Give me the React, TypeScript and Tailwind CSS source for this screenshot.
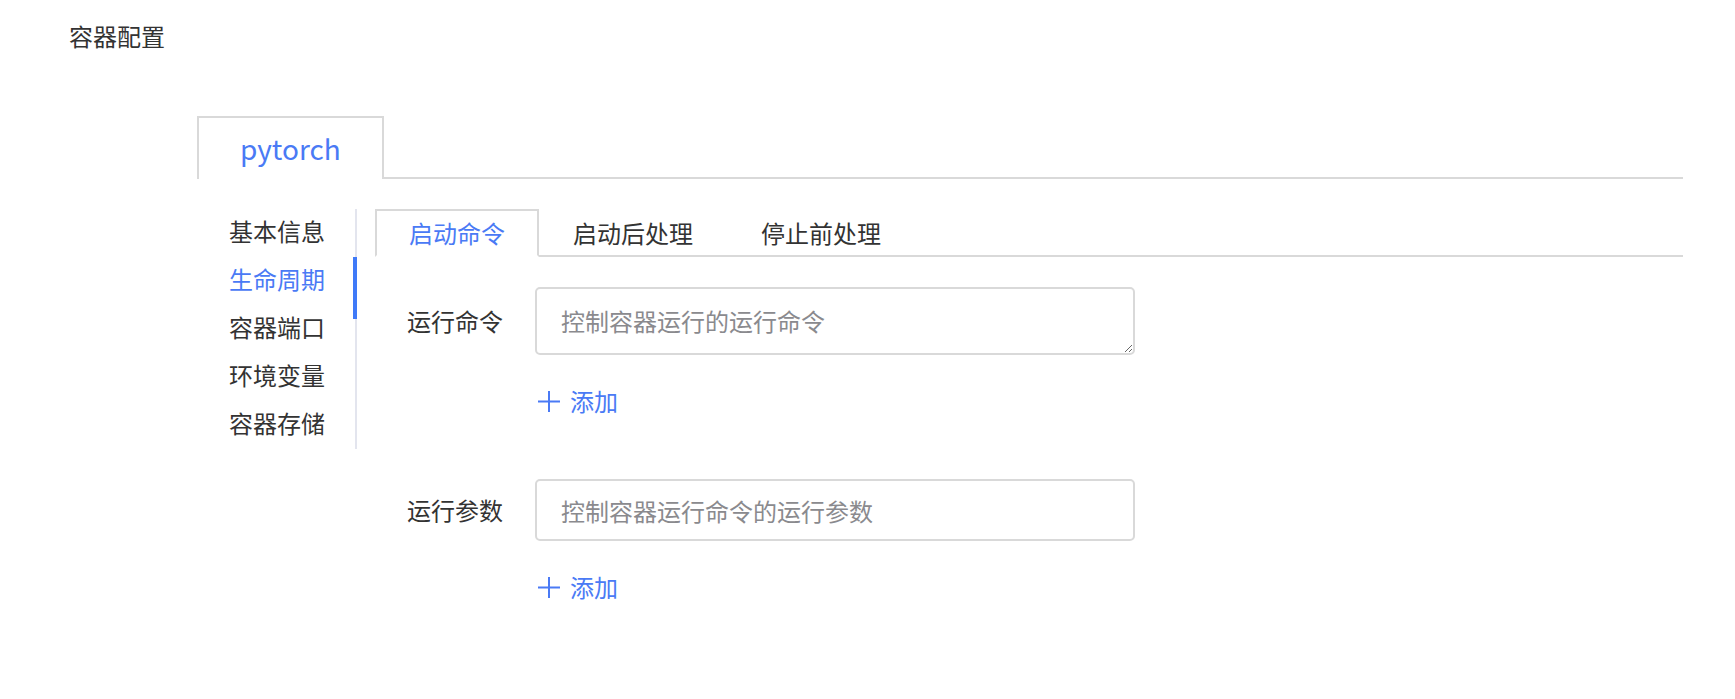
import { useState } from "react";

const navItems = ["基本信息", "生命周期", "容器端口", "环境变量", "容器存储"];
const lifeTabs = ["启动命令", "启动后处理", "停止前处理"];

function PlusIcon() {
  return (
    <svg width="24" height="24" viewBox="0 0 24 24" className="ml-[1px] shrink-0">
      <path d="M2 12.5H24M13 2V23" stroke="#4a7af5" strokeWidth="2" fill="none" />
    </svg>
  );
}

function AddButton() {
  return (
    <div className="flex items-center gap-[10px] mt-[28px] ml-[128px] text-[#4a7af5] leading-[36px] cursor-pointer">
      <PlusIcon />
      <span>添加</span>
    </div>
  );
}

export default function App() {
  const [activeNav] = useState(1);
  const [activeTab, setActiveTab] = useState(0);

  return (
    <div className="min-h-screen bg-white text-[24px] text-[#333] font-['Noto_Sans_CJK_SC','Noto_Sans',sans-serif]">
      <div className="pl-[69px] pt-[18px] leading-[36px]">容器配置</div>

      <div className="ml-[197px] w-[1486px] mt-[62px]">
        {/* container tabs */}
        <div className="flex">
          <div className="h-[63px] flex items-center px-[41px] border-2 border-b-0 border-[#d9d9d9] text-[28px] text-[#4a7af5] leading-none pb-[2px]">
            pytorch
          </div>
          <div className="flex-1 border-b-2 border-[#d9d9d9]" />
        </div>

        <div className="flex mt-[30px]">
          {/* side nav */}
          <div className="relative w-[160px] shrink-0 pl-[32px] border-r-2 border-[#e3e5ee] self-start">
            {navItems.map((item, i) => (
              <div
                key={item}
                className={
                  "h-[48px] leading-[44px] cursor-pointer " +
                  (i === activeNav ? "text-[#4a7af5]" : "text-[#333]")
                }
              >
                {item}
              </div>
            ))}
            <div className="absolute right-[-2px] top-[48px] w-[4px] h-[62px] bg-[#3f7af8]" />
          </div>

          {/* lifecycle panel */}
          <div className="flex-1 ml-[18px]">
            <div className="flex">
              {lifeTabs.map((t, i) => (
                <div
                  key={t}
                  onClick={() => setActiveTab(i)}
                  className={
                    "h-[48px] leading-[44px] cursor-pointer " +
                    (i === activeTab
                      ? "px-[32px] border-2 border-[#d9d9d9] border-b-white text-[#4a7af5]"
                      : "px-[34px] pt-[2px] border-b-2 border-[#d9d9d9] text-[#333]")
                  }
                >
                  {t}
                </div>
              ))}
              <div className="flex-1 border-b-2 border-[#d9d9d9]" />
            </div>

            <div className="pl-[32px] mt-[30px]">
              <div className="flex items-center">
                <label className="w-[96px] mr-[32px] leading-[36px]">运行命令</label>
                <textarea
                  placeholder="控制容器运行的运行命令"
                  className="w-[600px] h-[68px] border-2 border-[#d9d9d9] rounded-[5px] px-[24px] py-[14px] leading-[36px] outline-none placeholder:text-[#8a8a8e]"
                />
              </div>
              <AddButton />

              <div className="flex items-center mt-[60px]">
                <label className="w-[96px] mr-[32px] leading-[36px]">运行参数</label>
                <input
                  placeholder="控制容器运行命令的运行参数"
                  className="w-[600px] h-[62px] border-2 border-[#d9d9d9] rounded-[5px] px-[24px] leading-[36px] outline-none placeholder:text-[#8a8a8e]"
                />
              </div>
              <AddButton />
            </div>
          </div>
        </div>
      </div>
    </div>
  );
}
